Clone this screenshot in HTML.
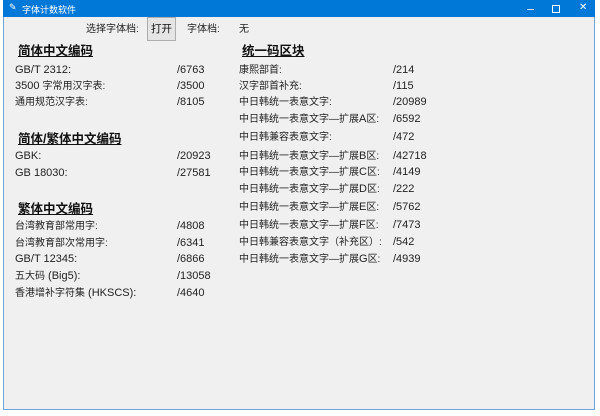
<!DOCTYPE html>
<html><head><meta charset="utf-8"><style>
body{margin:0;width:600px;height:416px;background:#fff;position:relative;overflow:hidden;font-family:"Liberation Sans","Noto Sans CJK SC",sans-serif;}
.win{position:absolute;left:3px;top:0;width:590px;height:409px;background:#f0f0f0;border:1px solid #6aa6da;border-top:none;}
.tb{position:absolute;left:3px;top:0;width:592px;height:17px;background:#0078d7;color:#fff;font-size:9px;}
.t{position:absolute;font-size:11px;color:#222;white-space:nowrap;line-height:14px;transform:translateY(-7px);}
.t i{font-style:normal;font-size:10px;}
.h{position:absolute;font-size:12.5px;font-weight:bold;color:#111;text-decoration:underline;white-space:nowrap;line-height:16px;transform:translateY(-8px);}
.btn{position:absolute;left:147px;top:17px;width:27px;height:22px;border:1px solid #adadad;background:#e5e5e5;font-size:10.5px;line-height:22px;text-align:center;color:#111;}
</style></head><body>
<div class="win"></div>
<div class="tb"><span style="position:absolute;left:6px;top:2px;font-size:9px">✎</span><span style="position:absolute;left:19px;top:3px">字体计数软件</span>
<span style="position:absolute;left:524px;top:3px;width:7px;height:1px;background:#cfe3f6;top:9px"></span><span style="position:absolute;left:549px;top:5px;width:6px;height:6px;border:1px solid #fff"></span><span style="position:absolute;left:576px;top:2px;font-size:10px">✕</span></div>
<div class="t" style="left:86px;top:29px"><i>选择字体档:</i></div>
<div class="btn">打开</div>
<div class="t" style="left:187px;top:29px"><i>字体档:</i></div>
<div class="t" style="left:239px;top:29px"><i>无</i></div>

<div class="h" style="left:18px;top:51px">简体中文编码</div>
<div class="t" style="left:15px;top:70px">GB/T 2312:</div><div class="t" style="left:177px;top:70px">/6763</div>
<div class="t" style="left:15px;top:86px">3500 <i>字常用汉字表:</i></div><div class="t" style="left:177px;top:86px">/3500</div>
<div class="t" style="left:15px;top:102px"><i>通用规范汉字表:</i></div><div class="t" style="left:177px;top:102px">/8105</div>
<div class="h" style="left:18px;top:139px">简体/繁体中文编码</div>
<div class="t" style="left:15px;top:156px">GBK:</div><div class="t" style="left:177px;top:156px">/20923</div>
<div class="t" style="left:15px;top:173px">GB 18030:</div><div class="t" style="left:177px;top:173px">/27581</div>
<div class="h" style="left:18px;top:209px">繁体中文编码</div>
<div class="t" style="left:15px;top:226px"><i>台湾教育部常用字:</i></div><div class="t" style="left:177px;top:226px">/4808</div>
<div class="t" style="left:15px;top:243px"><i>台湾教育部次常用字:</i></div><div class="t" style="left:177px;top:243px">/6341</div>
<div class="t" style="left:15px;top:259px">GB/T 12345:</div><div class="t" style="left:177px;top:259px">/6866</div>
<div class="t" style="left:15px;top:276px"><i>五大码</i> (Big5):</div><div class="t" style="left:177px;top:276px">/13058</div>
<div class="t" style="left:15px;top:293px"><i>香港增补字符集</i> (HKSCS):</div><div class="t" style="left:177px;top:293px">/4640</div>

<div class="h" style="left:242px;top:51px">统一码区块</div>
<div class="t" style="left:239px;top:70px"><i>康熙部首:</i></div><div class="t" style="left:393px;top:70px">/214</div>
<div class="t" style="left:239px;top:86px"><i>汉字部首补充:</i></div><div class="t" style="left:393px;top:86px">/115</div>
<div class="t" style="left:239px;top:102px"><i>中日韩统一表意文字:</i></div><div class="t" style="left:393px;top:102px">/20989</div>
<div class="t" style="left:239px;top:119px"><i>中日韩统一表意文字—扩展</i>A<i>区:</i></div><div class="t" style="left:393px;top:119px">/6592</div>
<div class="t" style="left:239px;top:137px"><i>中日韩兼容表意文字:</i></div><div class="t" style="left:393px;top:137px">/472</div>
<div class="t" style="left:239px;top:156px"><i>中日韩统一表意文字—扩展</i>B<i>区:</i></div><div class="t" style="left:393px;top:156px">/42718</div>
<div class="t" style="left:239px;top:172px"><i>中日韩统一表意文字—扩展</i>C<i>区:</i></div><div class="t" style="left:393px;top:172px">/4149</div>
<div class="t" style="left:239px;top:189px"><i>中日韩统一表意文字—扩展</i>D<i>区:</i></div><div class="t" style="left:393px;top:189px">/222</div>
<div class="t" style="left:239px;top:207px"><i>中日韩统一表意文字—扩展</i>E<i>区:</i></div><div class="t" style="left:393px;top:207px">/5762</div>
<div class="t" style="left:239px;top:225px"><i>中日韩统一表意文字—扩展</i>F<i>区:</i></div><div class="t" style="left:393px;top:225px">/7473</div>
<div class="t" style="left:239px;top:242px"><i>中日韩兼容表意文字（补充区）:</i></div><div class="t" style="left:393px;top:242px">/542</div>
<div class="t" style="left:239px;top:259px"><i>中日韩统一表意文字—扩展</i>G<i>区:</i></div><div class="t" style="left:393px;top:259px">/4939</div>
</body></html>
